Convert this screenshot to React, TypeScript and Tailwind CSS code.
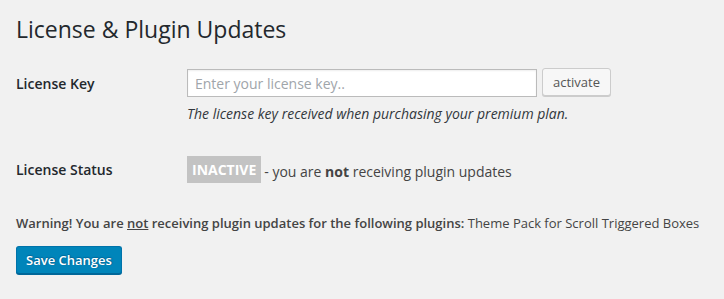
export default function App() {
  return (
    <div className="min-h-[299px] w-[724px] bg-[#f1f1f1] px-4 pt-[6px] text-[13px] text-[#444] [font-family:'Open_Sans',sans-serif]">
      <h2 className="text-[23px] leading-[29px] font-normal text-[#23282d] py-[9px] pr-[15px] pl-0 mb-[10px]">
        License &amp; Plugin Updates
      </h2>

      <div className="grid grid-cols-[171px_1fr]">
        {/* license key row */}
        <div className="pt-[11px] text-[14px] font-semibold text-[#23282d] leading-[20px]">License Key</div>
        <div className="pt-[6px]">
          <div className="flex items-center gap-[5px]">
            <input
              type="text"
              placeholder="Enter your license key.."
              className="w-[350px] h-[28px] bg-white border border-[#bbb] shadow-[inset_0_1px_2px_rgba(0,0,0,0.07)] px-[7px] text-[14px] text-[#32373c] placeholder:text-[#a0a5aa] outline-none"
            />
            <button className="h-[28px] px-[10px] rounded-[3px] border border-[#ccc] bg-[#f7f7f7] shadow-[0_1px_0_#ccc] text-[13px] text-[#555] leading-[26px] -mt-[2px]">
              activate
            </button>
          </div>
          <p className="mt-[7px] italic text-[14px] leading-[20px] text-[#32373c]">
            The license key received when purchasing your premium plan.
          </p>
        </div>

        {/* license status row */}
        <div className="pt-[36px] text-[14px] font-semibold text-[#23282d] leading-[20px]">License Status</div>
        <div className="pt-[32px] flex items-center">
          <span className="inline-block h-[27px] px-[5px] bg-[#c3c3c3] text-white text-[14px] font-bold leading-[27px]">
            INACTIVE
          </span>
          <span className="ml-[3px] mt-[3px] text-[14px] text-[#444]">
            - you are <strong className="font-bold">not</strong> receiving plugin updates
          </span>
        </div>
      </div>

      <p className="mt-[31px] text-[13px] leading-[18px] text-[#444]">
        <strong className="font-semibold">
          Warning! You are <u>not</u> receiving plugin updates for the following plugins:
        </strong>{" "}
        Theme Pack for Scroll Triggered Boxes
      </p>

      <div className="mt-[14px]">
        <button className="h-[28px] px-[9px] rounded-[3px] border border-[#0073aa] border-b-[#006799] bg-[#0085ba] shadow-[0_1px_0_#006799] text-white text-[13px] leading-[26px] font-semibold [text-shadow:0_-1px_1px_#006799,1px_0_1px_#006799]">
          Save Changes
        </button>
      </div>
    </div>
  );
}
